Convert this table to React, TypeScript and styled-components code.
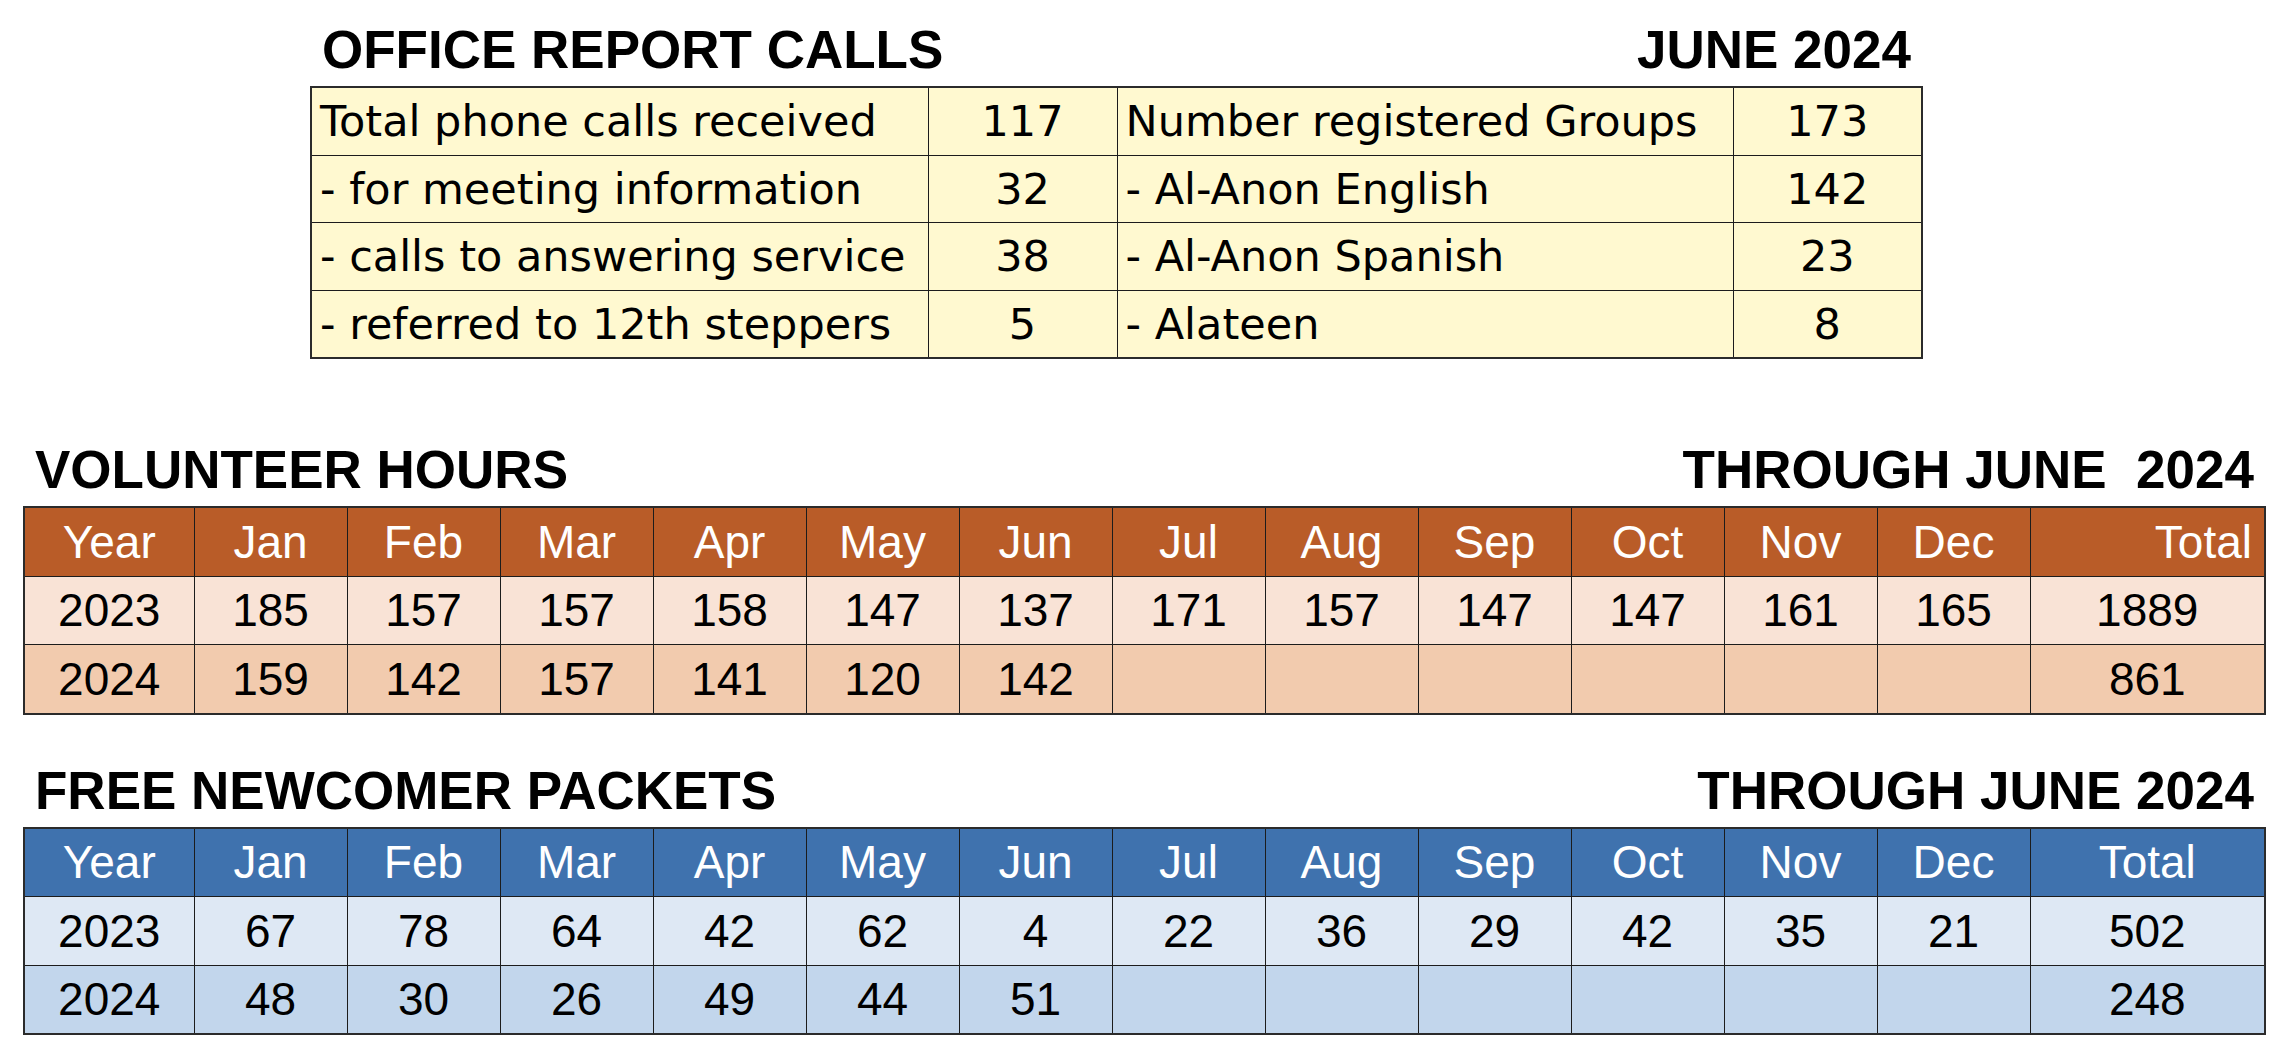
import styled, { createGlobalStyle } from 'styled-components'

const GlobalStyle = createGlobalStyle`
    html, body {
        margin: 0;
        padding: 0;
        background: #fff;
    }
    body {
        font-family: 'Liberation Sans', Arial, sans-serif;
        color: #000;
    }
`

const MONTHS = ['Jan', 'Feb', 'Mar', 'Apr', 'May', 'Jun', 'Jul', 'Aug', 'Sep', 'Oct', 'Nov', 'Dec']

const officeRows = [
    ['Total phone calls received', '117', 'Number registered Groups', '173'],
    ['- for meeting information', '32', '- Al-Anon English', '142'],
    ['- calls to answering service', '38', '- Al-Anon Spanish', '23'],
    ['- referred to 12th steppers', '5', '- Alateen', '8'],
]

const volunteerRows = [
    ['2023', '185', '157', '157', '158', '147', '137', '171', '157', '147', '147', '161', '165', '1889'],
    ['2024', '159', '142', '157', '141', '120', '142', '', '', '', '', '', '', '861'],
]

const packetRows = [
    ['2023', '67', '78', '64', '42', '62', '4', '22', '36', '29', '42', '35', '21', '502'],
    ['2024', '48', '30', '26', '49', '44', '51', '', '', '', '', '', '', '248'],
]

const orange = {
    head: '#b95c28',
    rows: ['#f9e3d6', '#f2cbae'],
}

const blue = {
    head: '#3f72ae',
    rows: ['#dee8f4', '#c2d6ec'],
}

const Page = styled.div`
    width: 2292px;
    height: 1060px;
    padding: 23px 0 0 23px;
    box-sizing: border-box;
    display: flex;
    flex-direction: column;
    align-items: flex-start;
`

const Section = styled.section<{ $indent?: number; $top?: number }>`
    display: flex;
    flex-direction: column;
    margin-left: ${(p) => p.$indent || 0}px;
    margin-top: ${(p) => p.$top || 0}px;
`

const TitleRow = styled.div`
    display: flex;
    justify-content: space-between;
    padding: 0 12px;
    margin-bottom: 10px;
`

const Title = styled.h2`
    margin: 0;
    font-family: 'Liberation Sans', Arial, sans-serif;
    font-weight: 700;
    font-size: 53px;
    line-height: 53px;
    white-space: pre;
`

const Grid = styled.table`
    border-collapse: collapse;
    table-layout: fixed;
    border: 2px solid #2b2b2b;
`

const OfficeCell = styled.td<{ $num?: boolean }>`
    background: #fff9d0;
    border: 1.5px solid #1c1c1c;
    height: 66.5px;
    padding: 0 ${(p) => (p.$num ? 0 : 8)}px;
    font-family: 'DejaVu Sans', sans-serif;
    font-size: 43px;
    text-align: ${(p) => (p.$num ? 'center' : 'left')};
    white-space: nowrap;
    overflow: hidden;
`

const HeadCell = styled.th<{ $bg: string; $align?: string }>`
    background: ${(p) => p.$bg};
    color: #fff;
    font-weight: 400;
    border: 1.5px solid #1c1c1c;
    height: 67.5px;
    padding: 0 ${(p) => (p.$align === 'right' ? 12 : 0)}px 0 0;
    font-size: 46px;
    text-align: ${(p) => p.$align || 'center'};
`

const DataCell = styled.td<{ $bg: string }>`
    background: ${(p) => p.$bg};
    border: 1.5px solid #1c1c1c;
    height: 67.5px;
    padding: 0;
    font-size: 46px;
    text-align: center;
`

const OfficeTable = () => (
    <Grid>
        <colgroup>
            <col style={{ width: 617 }} />
            <col style={{ width: 189 }} />
            <col style={{ width: 616 }} />
            <col style={{ width: 189 }} />
        </colgroup>
        <tbody>
            {officeRows.map((row, i) => (
                <tr key={i}>
                    {row.map((v, j) => (
                        <OfficeCell key={j} $num={j % 2 === 1}>
                            {v}
                        </OfficeCell>
                    ))}
                </tr>
            ))}
        </tbody>
    </Grid>
)

interface MonthTableProps {
    colors: { head: string; rows: string[] }
    rows: string[][]
    totalAlign: string
}

const MonthTable = ({ colors, rows, totalAlign }: MonthTableProps) => (
    <Grid>
        <colgroup>
            <col style={{ width: 170 }} />
            {MONTHS.map((m) => (
                <col key={m} style={{ width: 153 }} />
            ))}
            <col style={{ width: 235 }} />
        </colgroup>
        <thead>
            <tr>
                <HeadCell $bg={colors.head}>Year</HeadCell>
                {MONTHS.map((m) => (
                    <HeadCell key={m} $bg={colors.head}>
                        {m}
                    </HeadCell>
                ))}
                <HeadCell $bg={colors.head} $align={totalAlign}>
                    Total
                </HeadCell>
            </tr>
        </thead>
        <tbody>
            {rows.map((row, i) => (
                <tr key={i}>
                    {row.map((v, j) => (
                        <DataCell key={j} $bg={colors.rows[i]}>
                            {v}
                        </DataCell>
                    ))}
                </tr>
            ))}
        </tbody>
    </Grid>
)

const App = () => {
    return (
        <>
            <GlobalStyle />
            <Page>
                <Section $indent={287}>
                    <TitleRow>
                        <Title>OFFICE REPORT CALLS</Title>
                        <Title>JUNE 2024</Title>
                    </TitleRow>
                    <OfficeTable />
                </Section>
                <Section $top={84}>
                    <TitleRow>
                        <Title>VOLUNTEER HOURS</Title>
                        <Title>THROUGH JUNE  2024</Title>
                    </TitleRow>
                    <MonthTable colors={orange} rows={volunteerRows} totalAlign="right" />
                </Section>
                <Section $top={49}>
                    <TitleRow>
                        <Title>FREE NEWCOMER PACKETS</Title>
                        <Title>THROUGH JUNE 2024</Title>
                    </TitleRow>
                    <MonthTable colors={blue} rows={packetRows} totalAlign="center" />
                </Section>
            </Page>
        </>
    )
}

export default App
